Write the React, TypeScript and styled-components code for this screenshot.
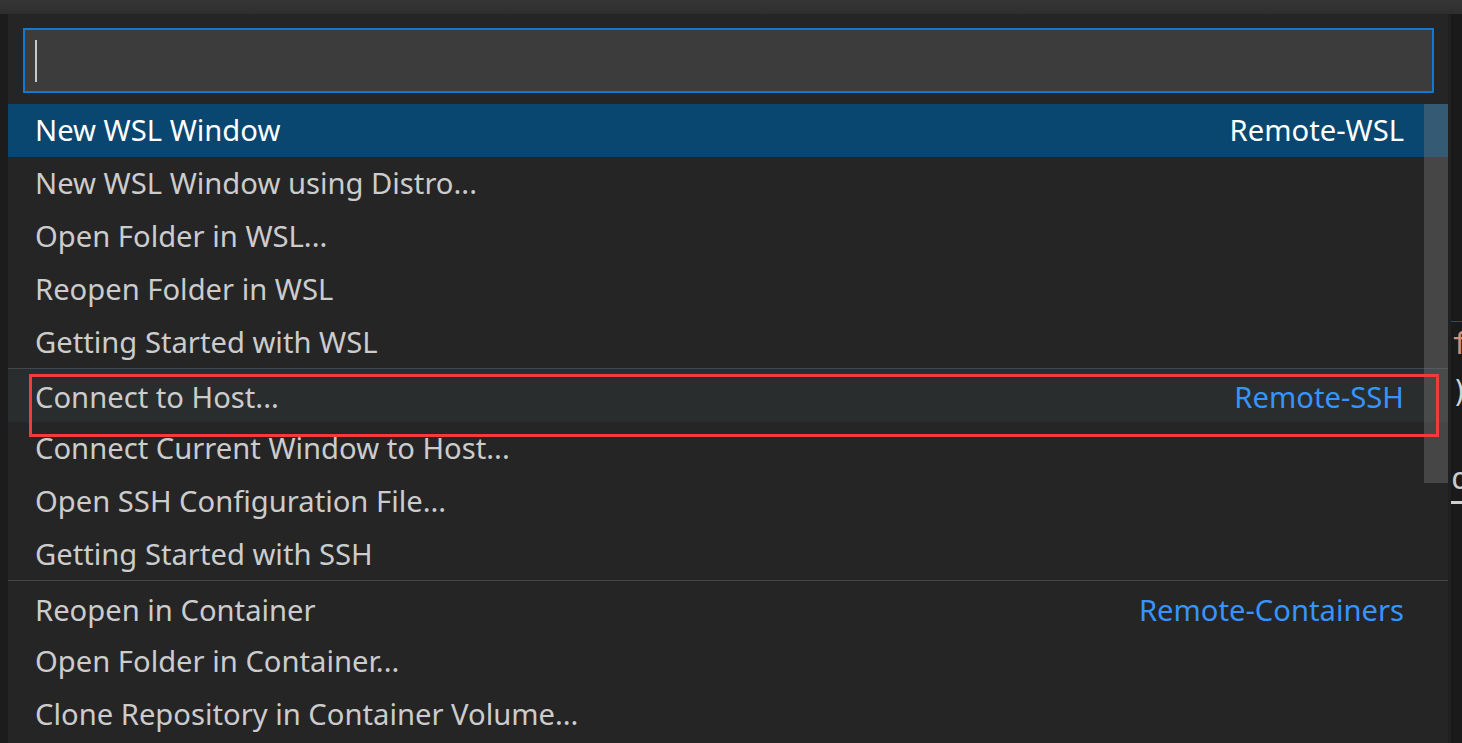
import styled, { createGlobalStyle } from "styled-components";

const GlobalStyle = createGlobalStyle`
    html, body {
        margin: 0;
        padding: 0;
        background: #1e1e1e;
        overflow: hidden;
    }
    * {
        box-sizing: border-box;
    }
`;

type Item = {
    label: string;
    detail?: string;
    sep?: boolean;
    selected?: boolean;
    hovered?: boolean;
};

const items: Item[] = [
    { label: "New WSL Window", detail: "Remote-WSL", selected: true },
    { label: "New WSL Window using Distro..." },
    { label: "Open Folder in WSL..." },
    { label: "Reopen Folder in WSL" },
    { label: "Getting Started with WSL" },
    { label: "Connect to Host...", detail: "Remote-SSH", sep: true, hovered: true },
    { label: "Connect Current Window to Host..." },
    { label: "Open SSH Configuration File..." },
    { label: "Getting Started with SSH" },
    { label: "Reopen in Container", detail: "Remote-Containers", sep: true },
    { label: "Open Folder in Container..." },
    { label: "Clone Repository in Container Volume..." },
];

const App = () => {
    return (
        <Page>
            <GlobalStyle />
            <TitleStrip />
            <Body>
                <Gutter />
                <QuickInput>
                    <InputBox>
                        <Caret />
                    </InputBox>
                    <List>
                        {items.map((item) => (
                            <Row key={item.label} $sep={item.sep} $selected={item.selected} $hovered={item.hovered}>
                                <Label $selected={item.selected}>{item.label}</Label>
                                {item.detail && <Detail $selected={item.selected}>{item.detail}</Detail>}
                            </Row>
                        ))}
                        <Scrollbar />
                        <Callout />
                    </List>
                </QuickInput>
                <Shade />
                {/* editor text peeking out behind the quick pick */}
                <EditorPeek>
                    <PeekRule />
                    <PeekLine $color="#ce9178" $height={44}>f</PeekLine>
                    <PeekLine $color="#d4d4d4" $height={52} $after={38}>)</PeekLine>
                    <PeekLine $color="#cccccc" $height={45}>o</PeekLine>
                    <PeekUnderline />
                </EditorPeek>
            </Body>
        </Page>
    );
};

const Page = styled.div`
    width: 1462px;
    height: 743px;
    overflow: hidden;
    display: flex;
    flex-direction: column;
    font-family: "Noto Sans", "Open Sans", sans-serif;
`;

const TitleStrip = styled.div`
    height: 14px;
    flex: none;
    background: linear-gradient(#363636, #2e2e2e);
`;

const Body = styled.div`
    flex: 1;
    display: flex;
    min-height: 0;
`;

const Gutter = styled.div`
    width: 8px;
    flex: none;
    background: #1c1c1c;
`;

const QuickInput = styled.div`
    width: 1440px;
    flex: none;
    background: #252526;
    padding: 14px 14px 0 15px;
    display: flex;
    flex-direction: column;
`;

const InputBox = styled.div`
    height: 65px;
    border: 2px solid #0e7ad3;
    background: #3c3c3c;
    display: flex;
    align-items: center;
    padding-left: 10px;
`;

const Caret = styled.span`
    width: 2px;
    height: 42px;
    background: #c8c8c8;
`;

const List = styled.div`
    position: relative;
    margin: 11px -14px 0 -15px;
`;

const Row = styled.div<{ $sep?: boolean; $selected?: boolean; $hovered?: boolean }>`
    height: ${(p) => (p.$sep ? "54px" : "52.8px")};
    display: flex;
    align-items: center;
    justify-content: space-between;
    padding: ${(p) => (p.$sep ? "4px" : "0")} 44px 0 27px;
    border-top: ${(p) => (p.$sep ? "1px solid #45454a" : "none")};
    background: ${(p) => (p.$selected ? "#094771" : p.$hovered ? "#2a2d2e" : "transparent")};
    font-size: 29.2px;
    white-space: nowrap;
`;

const Label = styled.span<{ $selected?: boolean }>`
    color: ${(p) => (p.$selected ? "#ffffff" : "#cccccc")};
`;

const Detail = styled.span<{ $selected?: boolean }>`
    color: ${(p) => (p.$selected ? "#ffffff" : "#3794ff")};
`;

const Scrollbar = styled.div`
    position: absolute;
    top: 0;
    right: 0;
    width: 24px;
    height: 379px;
    background: rgba(121, 121, 121, 0.4);
`;

const Callout = styled.div`
    position: absolute;
    left: 21px;
    top: 270px;
    width: 1410px;
    height: 63px;
    border: 3px solid #f23b3b;
    pointer-events: none;
`;

const Shade = styled.div`
    width: 3px;
    flex: none;
    background: #202020;
`;

const EditorPeek = styled.div`
    flex: 1;
    background: #1a1a1a;
    overflow: hidden;
    padding-top: 307px;
    font-family: "DejaVu Sans Mono", monospace;
    font-size: 30px;
`;

const PeekRule = styled.div`
    height: 1px;
    background: #2a4c6e;
`;

const PeekLine = styled.div<{ $color: string; $height: number; $after?: number }>`
    height: ${(p) => p.$height}px;
    line-height: ${(p) => p.$height}px;
    margin-bottom: ${(p) => p.$after ?? 0}px;
    color: ${(p) => p.$color};
`;

const PeekUnderline = styled.div`
    height: 3px;
    background: #cfcfcf;
`;

export default App;
